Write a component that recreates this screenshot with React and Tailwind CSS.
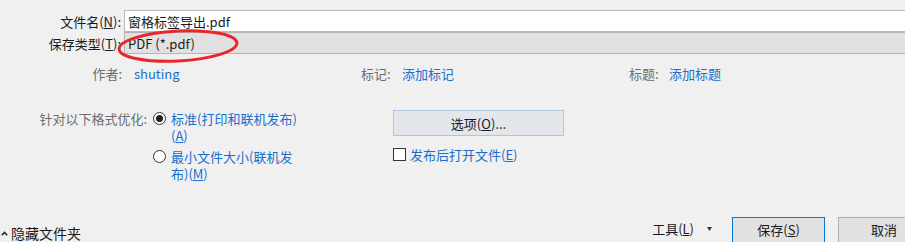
import React from "react";

const font = { fontFamily: '"Noto Sans CJK SC", "Noto Sans", sans-serif' };

// mnemonic letter, underlined like a Windows access key
function Key({ children }) {
  return <span className="underline underline-offset-[1px] decoration-1">{children}</span>;
}

function Radio({ checked }) {
  return (
    <div className="mt-[2px] w-[13px] h-[13px] shrink-0 rounded-full border border-[#333333] bg-white flex items-center justify-center">
      {checked && <div className="w-[7px] h-[7px] rounded-full bg-[#222222]" />}
    </div>
  );
}

export default function App() {
  return (
    <div
      className="relative w-[905px] h-[242px] overflow-hidden bg-[#f0f0f0] text-[13px] leading-[17px] text-[#1a1a1a] flex flex-col pt-[10px]"
      style={font}
    >
      {/* File name */}
      <div className="flex h-[22px] items-center">
        <div className="w-[124px] pr-[3px] text-right">
          文件名(<Key>N</Key>):
        </div>
        <div className="flex-1 h-[22px] bg-white border border-r-0 border-[#b9b9b9] pl-[3px] flex items-center">
          窗格标签导出.pdf
        </div>
      </div>

      {/* Save type */}
      <div className="flex h-[22px] items-center">
        <div className="w-[124px] pr-[3px] text-right">
          保存类型(<Key>T</Key>):
        </div>
        <div className="flex-1 h-[22px] bg-[#e1e1e1] border border-r-0 border-[#b4b4b4] pl-[3px] flex items-center">
          PDF (*.pdf)
        </div>
      </div>

      {/* Meta */}
      <div className="flex mt-[11px]">
        <div className="w-[122px] text-right text-[#6d6d6d]">作者:</div>
        <div className="w-[239px] pl-[12px] text-[#1a6fcc]">shuting</div>
        <div className="w-[41px] text-[#6d6d6d]">标记:</div>
        <div className="w-[227px] text-[#1a6fcc]">添加标记</div>
        <div className="w-[40px] text-[#6d6d6d]">标题:</div>
        <div className="text-[#1a6fcc]">添加标题</div>
      </div>

      {/* Optimize */}
      <div className="flex mt-[28px]">
        <div className="w-[147px] text-right text-[#6d6d6d]">针对以下格式优化:</div>
        <div className="ml-[6px] w-[240px] flex flex-col gap-[4px]">
          <div className="flex gap-[5px]">
            <Radio checked />
            <div className="text-[#1a6fcc]">
              <div>标准(打印和联机发布)</div>
              <div>
                (<Key>A</Key>)
              </div>
            </div>
          </div>
          <div className="flex gap-[5px]">
            <Radio />
            <div className="text-[#1a6fcc]">
              <div>最小文件大小(联机发</div>
              <div>
                布)(<Key>M</Key>)
              </div>
            </div>
          </div>
        </div>
        <div className="flex flex-col">
          <div className="w-[171px] h-[26px] bg-[#e3e6ea] border border-[#a8c6e6] flex items-center justify-center">
            选项(<Key>O</Key>)...
          </div>
          <div className="flex items-center gap-[4px] mt-[10px]">
            <div className="w-[13px] h-[13px] border border-[#333333] bg-white" />
            <div className="text-[#1a6fcc]">
              发布后打开文件(<Key>E</Key>)
            </div>
          </div>
        </div>
      </div>

      {/* Bottom bar */}
      <div className="flex items-start mt-[35px] mr-[-25px]">
        <div className="flex items-center mt-[8px] flex-1">
          <svg width="7" height="5" viewBox="0 0 7 5" className="ml-[1px] mr-[3px]">
            <path d="M0.8 4.3 L3.5 1.4 L6.2 4.3" fill="none" stroke="#222" strokeWidth="1.4" />
          </svg>
          <span className="text-[14px]">隐藏文件夹</span>
        </div>
        <div className="flex items-center mt-[3px]">
          <span>
            工具(<Key>L</Key>)
          </span>
          <svg width="5" height="4" viewBox="0 0 5 4" className="ml-[13px]">
            <path d="M0 0 H5 L2.5 4 Z" fill="#333" />
          </svg>
        </div>
        <div className="ml-[20px] w-[93px] h-[30px] bg-[#e1e1e1] border border-[#0078d7] flex justify-center pt-[3px]">
          保存(<Key>S</Key>)
        </div>
        <div className="ml-[13px] w-[92px] h-[30px] bg-[#e1e1e1] border border-[#adadad] flex justify-center pt-[3px]">
          取消
        </div>
      </div>

      {/* red annotation ellipse */}
      <svg className="absolute left-[110px] top-[25px] pointer-events-none" width="140" height="44" viewBox="0 0 140 44">
        <ellipse cx="68" cy="21" rx="59" ry="15" fill="none" stroke="#e8272b" strokeWidth="3" transform="rotate(-3 68 21)" />
      </svg>
    </div>
  );
}
